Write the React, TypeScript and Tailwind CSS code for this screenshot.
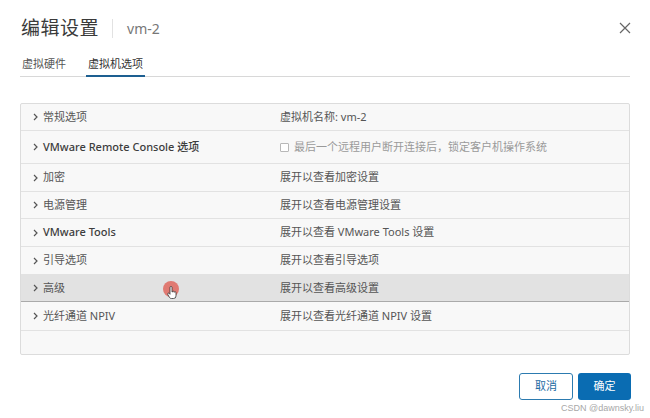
import React from 'react'

const rows: { label: string; value: React.ReactNode; h: string; hover?: boolean; bold?: boolean }[] = [
  { label: '常规选项', value: '虚拟机名称: vm-2', h: 'h-[27px]' },
  {
    label: 'VMware Remote Console 选项',
    value: (
      <span className="flex items-center gap-[5px] text-[#9a9a9a]">
        <span className="inline-block w-[9px] h-[9px] border border-[#b8b8b8] bg-white rounded-[1px]"></span>
        最后一个远程用户断开连接后，锁定客户机操作系统
      </span>
    ),
    h: 'h-[33px]',
    bold: true,
  },
  { label: '加密', value: '展开以查看加密设置', h: 'h-[28px]' },
  { label: '电源管理', value: '展开以查看电源管理设置', h: 'h-[27px]' },
  { label: 'VMware Tools', value: '展开以查看 VMware Tools 设置', h: 'h-[28px]', bold: true },
  { label: '引导选项', value: '展开以查看引导选项', h: 'h-[28px]' },
  { label: '高级', value: '展开以查看高级设置', h: 'h-[27px]', hover: true },
  { label: '光纤通道 NPIV', value: '展开以查看光纤通道 NPIV 设置', h: 'h-[29px]' },
]

const Chevron = () => (
  <svg width="7" height="8" viewBox="0 0 7 8" className="shrink-0">
    <path d="M2 1 L5 4 L2 7" fill="none" stroke="#555" strokeWidth="1.2" />
  </svg>
)

export default function App() {
  return (
    <div
      className="w-[650px] h-[418px] bg-white relative overflow-hidden text-[#444]"
      style={{ fontFamily: '"Noto Sans", "Noto Sans CJK SC", sans-serif' }}
    >
      {/* header */}
      <div className="flex items-center h-[22px] mt-[17px] pl-[21px] pr-[18px]">
        <span className="text-[19px] leading-none text-[#3a3a3a] tracking-[0.5px]">编辑设置</span>
        <span className="w-px h-[19px] bg-[#e2e2e2] ml-[13px]"></span>
        <span className="ml-[14px] text-[14px] text-[#777]">vm-2</span>
        <svg width="12" height="12" viewBox="0 0 12 12" className="ml-auto mr-[1px]">
          <path d="M1 1 L11 11 M11 1 L1 11" stroke="#666" strokeWidth="1.2" />
        </svg>
      </div>

      {/* tabs */}
      <div className="mx-5 mt-[15px] flex border-b border-[#d8d8d8] h-[23px] text-[11px]">
        <div className="px-[2px] pt-[3px] text-[#555] leading-[14px]">虚拟硬件</div>
        <div className="ml-[18px] px-[2px] pt-[3px] text-[#333] leading-[14px] border-b-[2px] border-[#1d5f91] mb-[-1px]">
          虚拟机选项
        </div>
      </div>

      {/* table */}
      <div className="mx-5 mt-[26px] border border-[#dcdcdc] rounded-[2px] bg-[#f8f8f8] text-[11px]">
        {rows.map((r, i) => (
          <div
            key={i}
            className={`relative flex items-center border-b ${r.hover ? 'bg-[#e2e2e2] border-[#aaaaaa]' : 'border-[#e2e2e2]'} ${r.h}`}
          >
            <div className="w-[259px] flex items-center pl-[11px] gap-[4px]">
              <Chevron />
              <span className={r.bold ? 'text-[#3d3d3d] font-medium' : 'text-[#555]'}>{r.label}</span>
            </div>
            <div className="text-[#555]">{r.value}</div>
            {r.hover && (
              <div className="absolute left-[142px] top-[6px] w-[16px] h-[16px] rounded-full bg-[#e07a72]">
                <svg width="10" height="13" viewBox="0 0 10 13" className="absolute left-[4px] top-[5px]">
                  <path
                    d="M3 1.5 a1 1 0 0 1 2 0 V6 h0.5 a0.9 0.9 0 0 1 1.8 0.3 a0.9 0.9 0 0 1 1.7 0.5 V10 a2.5 2.5 0 0 1 -2.5 2.5 H4.5 a2.5 2.5 0 0 1 -2 -1 L0.8 8.5 a0.9 0.9 0 0 1 1.5 -1 L3 8.3 Z"
                    fill="#fff"
                    stroke="#333"
                    strokeWidth="0.8"
                  />
                </svg>
              </div>
            )}
          </div>
        ))}
        <div className="h-[23px]"></div>
      </div>

      {/* footer buttons */}
      <div className="flex justify-end gap-[5px] mr-[19px] mt-[18px]">
        <button className="w-[54px] h-[27px] border border-[#2c7bb0] rounded-[3px] bg-white text-[#1b6aa2] text-[11px]">
          取消
        </button>
        <button className="w-[53px] h-[27px] rounded-[3px] bg-[#0a6cb2] text-white text-[11px]">确定</button>
      </div>

      <div
        className="absolute right-[6px] bottom-[3px] text-[9px] text-[#a8a8a8]"
        style={{ fontFamily: '"Liberation Sans", Arial, sans-serif' }}
      >
        CSDN @dawnsky.liu
      </div>
    </div>
  )
}
